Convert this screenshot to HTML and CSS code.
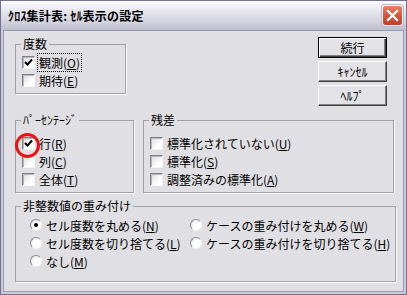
FILE: index.html
```html
<!DOCTYPE html>
<html lang="ja">
<head>
    <meta charset="UTF-8">
    <title>ｸﾛｽ集計表: ｾﾙ表示の設定</title>
    <link rel="stylesheet" href="styles.css">
</head>
<body>

<div class="window">
    <div class="titlebar">
        <span class="title">ｸﾛｽ集計表: ｾﾙ表示の設定</span>
        <span class="close">
            <svg width="21" height="21" viewBox="0 0 21 21">
                <path d="M6 6 L15 15 M15 6 L6 15" stroke="#fff" stroke-width="2.2" stroke-linecap="square"/>
            </svg>
        </span>
    </div>

    <div class="client">
        <div class="row-top">
            <fieldset class="group g-count">
                <legend>度数</legend>
                <div class="opts">
                    <label class="opt"><span class="check"><svg width="9" height="9" viewBox="0 0 9 9"><path d="M1 4 L3.5 6.5 L8 1.5" fill="none" stroke="#000" stroke-width="2"/></svg></span><span class="focus">観測(<u>O</u>)</span></label>
                    <label class="opt"><span class="check"></span>期待(<u>E</u>)</label>
                </div>
            </fieldset>
            <div class="buttons">
                <button class="btn default">続行</button>
                <button class="btn">ｷｬﾝｾﾙ</button>
                <button class="btn">ﾍﾙﾌﾟ</button>
            </div>
        </div>

        <div class="row-mid">
            <fieldset class="group g-pct">
                <legend>ﾊﾟｰｾﾝﾃｰｼﾞ</legend>
                <div class="opts">
                    <label class="opt"><span class="check"><svg width="9" height="9" viewBox="0 0 9 9"><path d="M1 4 L3.5 6.5 L8 1.5" fill="none" stroke="#000" stroke-width="2"/></svg></span>行(<u>R</u>)</label>
                    <label class="opt"><span class="check"></span>列(<u>C</u>)</label>
                    <label class="opt"><span class="check"></span>全体(<u>T</u>)</label>
                </div>
            </fieldset>
            <fieldset class="group g-resid">
                <legend>残差</legend>
                <div class="opts">
                    <label class="opt"><span class="check"></span>標準化されていない(<u>U</u>)</label>
                    <label class="opt"><span class="check"></span>標準化(<u>S</u>)</label>
                    <label class="opt"><span class="check"></span>調整済みの標準化(<u>A</u>)</label>
                </div>
            </fieldset>
        </div>

        <fieldset class="group g-weight">
            <legend>非整数値の重み付け</legend>
            <div class="radios">
                <label class="opt"><span class="radio on"></span>セル度数を丸める(<u>N</u>)</label>
                <label class="opt"><span class="radio"></span>ケースの重み付けを丸める(<u>W</u>)</label>
                <label class="opt"><span class="radio"></span>セル度数を切り捨てる(<u>L</u>)</label>
                <label class="opt"><span class="radio"></span>ケースの重み付けを切り捨てる(<u>H</u>)</label>
                <label class="opt"><span class="radio"></span>なし(<u>M</u>)</label>
            </div>
        </fieldset>
    </div>

    <!-- 注釈の赤丸 -->
    <svg class="mark" width="27" height="27" viewBox="0 0 27 27">
        <circle cx="13.5" cy="13.5" r="11" fill="none" stroke="#ee1111" stroke-width="3"/>
    </svg>
</div>

</body>
</html>
```

FILE: styles.css
```css
body {
    margin: 0;
    font-family: "Noto Sans CJK JP", sans-serif;
    font-size: 12px;
    color: #000;
    background-color: #e0dfe3;
}

.window {
    position: relative;
    width: 407px;
    height: 295px;
    box-sizing: border-box;
    border: 1px solid #70718c;
    background-color: #cbcbd8;
}

.titlebar {
    height: 29px;
    display: flex;
    align-items: center;
    justify-content: space-between;
    padding: 0 3px 0 7px;
    background: linear-gradient(#fbfbfd 0%, #e6e6ee 35%, #d2d2de 75%, #bdbdcc 100%);
}

.title {
    font-weight: bold;
    font-size: 12px;
    letter-spacing: 0.2px;
}

.close {
    width: 21px;
    height: 21px;
    box-sizing: border-box;
    border: 1px solid #fff;
    border-radius: 3px;
    background: linear-gradient(#e8826c, #d4553d 50%, #c0412c);
    box-shadow: 0 0 0 1px #b8b8c8;
    display: flex;
}

.close svg {
    margin: -1px;
}

.client {
    margin: 0 2px;
    height: 262px;
    box-sizing: border-box;
    border: 1px solid #9a9bb2;
    background-color: #e0dfe3;
    padding: 6px 0 0 11px;
}

.group {
    margin: 0;
    padding: 0;
    min-width: 0;
    box-sizing: border-box;
    border: 1px solid #a0a0a8;
    box-shadow: 1px 1px 0 #fff;
}

.group legend {
    margin-left: 5px;
    padding: 0 2px;
    line-height: 14px;
}

.opts {
    padding: 2px 0 0 6px;
}

.opt {
    display: flex;
    align-items: center;
    height: 18px;
    white-space: nowrap;
}

.check {
    width: 13px;
    height: 13px;
    box-sizing: border-box;
    margin-right: 4px;
    border: 1px solid;
    border-color: #808086 #f4f4f4 #f4f4f4 #808086;
    box-shadow: inset 1px 1px 0 #b8b8bc;
    background: linear-gradient(135deg, #dcdcdc, #ffffff 70%);
    display: flex;
    align-items: center;
    justify-content: center;
}

.focus {
    outline: 1px dotted #000;
    outline-offset: 0;
    padding: 0 1px;
    margin-left: -1px;
}

.radio {
    position: relative;
    width: 12px;
    height: 12px;
    box-sizing: border-box;
    margin-right: 4px;
    border: 1px solid;
    border-color: #8a8a90 #f4f4f4 #f4f4f4 #8a8a90;
    border-radius: 50%;
    background: radial-gradient(circle at 65% 65%, #ffffff 40%, #dadada);
}

.radio.on::after {
    content: "";
    position: absolute;
    left: 3px;
    top: 3px;
    width: 4px;
    height: 4px;
    border-radius: 50%;
    background-color: #000;
}

.row-top {
    display: flex;
    height: 69px;
}

.g-count {
    width: 111px;
    height: 57px;
}

.buttons {
    margin-left: auto;
    margin-right: 16px;
    display: flex;
    flex-direction: column;
    gap: 3px;
}

.btn {
    width: 69px;
    height: 21px;
    padding: 0;
    font-family: inherit;
    font-size: 12px;
    color: #000;
    background-color: #e3e2e6;
    border: 1px solid;
    border-color: #fff #404040 #404040 #fff;
    box-shadow: inset -1px -1px 0 #808080;
}

.btn.default {
    border-color: #000;
    box-shadow: inset 1px 1px 0 #fff, inset -1px -1px 0 #404040, inset -2px -2px 0 #808080;
}

.row-mid {
    display: flex;
    gap: 9px;
    margin-top: 7px;
}

.g-pct {
    width: 119px;
    height: 80px;
}

.g-resid {
    width: 251px;
    height: 80px;
}

.g-pct .opts,
.g-resid .opts {
    padding-top: 7px;
}

.g-weight {
    width: 381px;
    height: 83px;
    margin-top: 6px;
}

.radios {
    display: grid;
    grid-template-columns: 160px auto;
    padding: 3px 0 0 14px;
}

.mark {
    position: absolute;
    left: 13px;
    top: 131px;
}
```
